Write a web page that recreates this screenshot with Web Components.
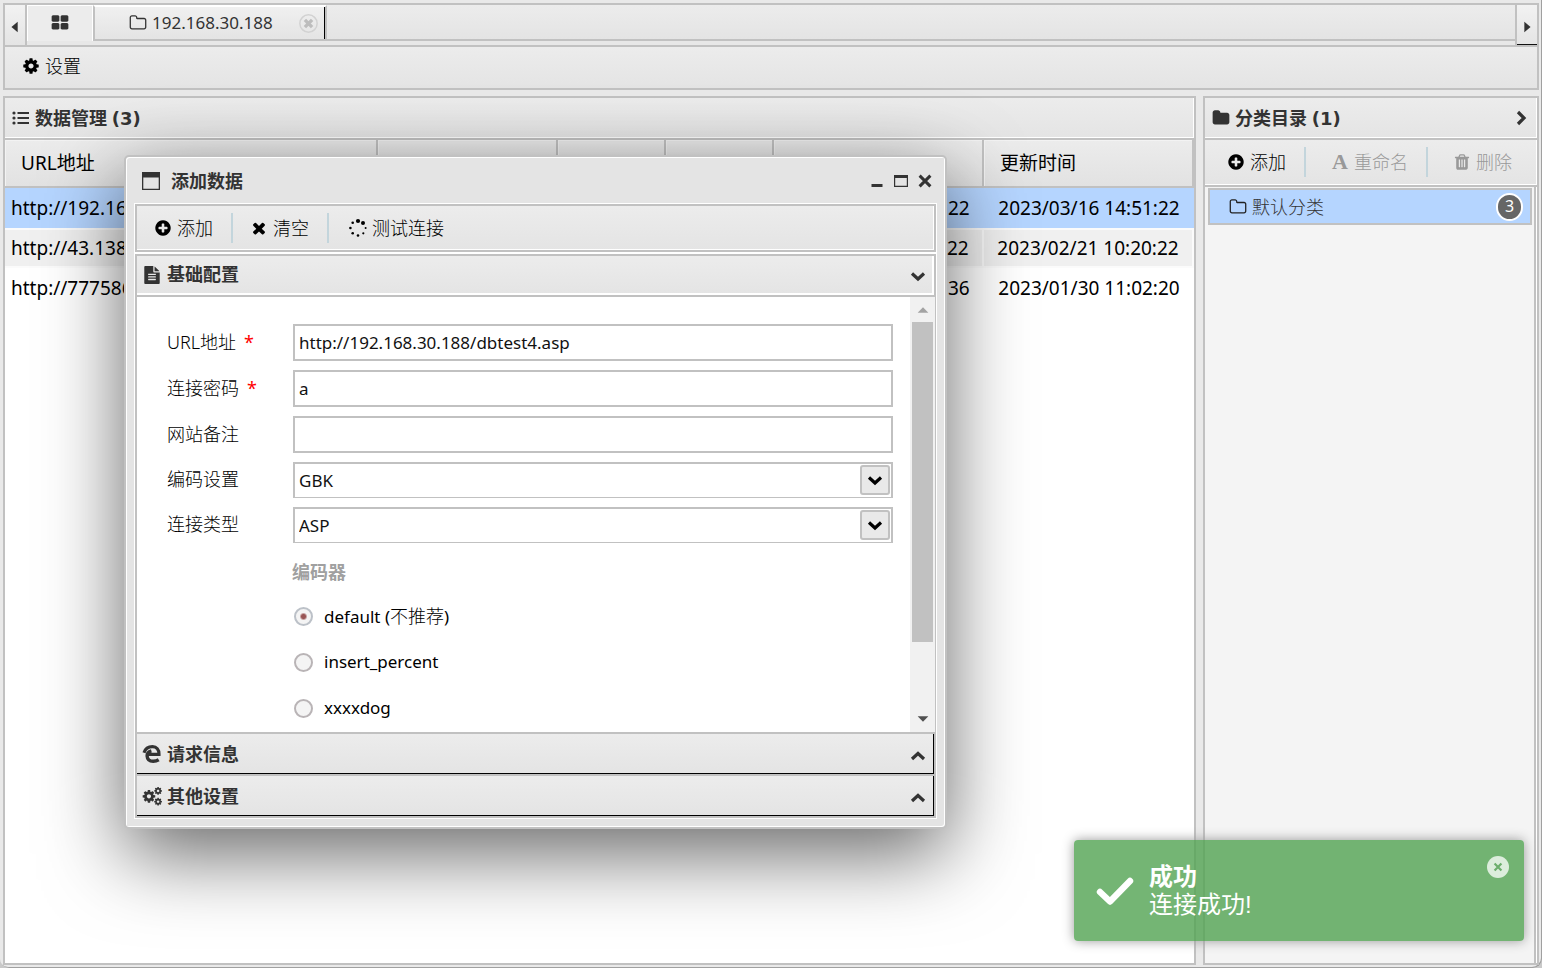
<!DOCTYPE html>
<html lang="zh-CN">
<head>
<meta charset="utf-8">
<title>数据管理</title>
<style>
  html, body { height: 100%; }
  body {
    margin: 0;
    overflow: hidden;
    background: #c9c9c9;
    color: #000;
    font: 18px/24px "Noto Sans", "Noto Sans CJK SC", sans-serif;
    --line: #c1c1c1;
    --ink: #333;
    --bar: linear-gradient(#ececec, #e4e4e4);
    --select: #b5d5ff;
    --count-font: "DejaVu Sans", "Noto Sans CJK SC", sans-serif;
  }
</style>
</head>
<body>
<app-shell></app-shell>

<script>
const COG = 'M1152 896q0-106-75-181t-181-75-181 75-75 181 75 181 181 75 181-75 75-181zm512-109v222q0 12-8 23t-20 13l-185 28q-19 54-39 91 35 50 107 138 10 12 10 25t-9 23q-27 37-99 108t-94 71q-12 0-26-9l-138-108q-44 23-91 38-16 136-29 186-7 28-36 28h-222q-14 0-24.5-8.5t-11.5-21.5l-28-184q-49-16-90-37l-141 107q-10 9-25 9-14 0-25-11-126-114-165-168-7-10-7-23 0-12 8-23 15-21 51-66.5t54-70.5q-27-50-41-99l-183-27q-13-2-21-12.5t-8-23.5v-222q0-12 8-23t19-13l186-28q14-46 39-92-40-57-107-138-10-12-10-24 0-10 9-23 26-36 98.5-107.5t94.5-71.5q13 0 26 10l138 107q44-23 91-38 16-136 29-186 7-28 36-28h222q14 0 24.5 8.5t11.5 21.5l28 184q49 16 90 37l142-107q9-9 24-9 13 0 25 10 129 119 165 170 7 8 7 22 0 12-8 23-15 21-51 66.5t-54 70.5q26 50 41 98l183 28q13 2 21 12.5t8 23.5z';
const fa = d => `<svg viewBox="0 0 1792 1792"><path fill="currentColor" d="${d}"/></svg>`;
const pic = (s, box = '0 0 18 18') => `<svg viewBox="${box}" fill="currentColor">${s}</svg>`;
const chevron = pts => pic(`<polyline points="${pts}" fill="none" stroke="currentColor" stroke-width="3.2"/>`);
const ICONS = {
  cog: fa(COG),
  plus: fa('M1344 960v-128q0-26-19-45t-45-19h-256v-256q0-26-19-45t-45-19h-128q-26 0-45 19t-19 45v256h-256q-26 0-45 19t-19 45v128q0 26 19 45t45 19h256v256q0 26 19 45t45 19h128q26 0 45-19t19-45v-256h256q26 0 45-19t19-45zm320-64q0 209-103 385.5t-279.5 279.5-385.5 103-385.5-103-279.5-279.5-103-385.5 103-385.5 279.5-279.5 385.5-103 385.5 103 279.5 279.5 103 385.5z'),
  times: fa('M1490 1322q0 40-28 68l-136 136q-28 28-68 28t-68-28l-294-294-294 294q-28 28-68 28t-68-28l-136-136q-28-28-28-68t28-68l294-294-294-294q-28-28-28-68t28-68l136-136q28-28 68-28t68 28l294 294 294-294q28-28 68-28t68 28l136 136q28 28 28 68t-28 68l-294 294 294 294q28 28 28 68z'),
  close: pic('<path d="M3.600 3.600l10.800 10.800M14.400 3.600L3.600 14.400" stroke="currentColor" stroke-width="3"/>'),
  folder: fa('M1728 608v704q0 92-66 158t-158 66h-1216q-92 0-158-66t-66-158v-960q0-92 66-158t158-66h320q92 0 158 66t66 158v32h672q92 0 158 66t66 158z'),
  'folder-open': fa('M1600 1312v-704q0-40-28-68t-68-28h-704q-40 0-68-28t-28-68v-64q0-40-28-68t-68-28h-320q-40 0-68 28t-28 68v960q0 40 28 68t68 28h1216q40 0 68-28t28-68zm128-704v704q0 92-66 158t-158 66h-1216q-92 0-158-66t-66-158v-960q0-92 66-158t158-66h320q92 0 158 66t66 158v32h672q92 0 158 66t66 158z'),
  grid: fa('M832 1024v384q0 52-38 90t-90 38h-512q-52 0-90-38t-38-90v-384q0-52 38-90t90-38h512q52 0 90 38t38 90zm0-768v384q0 52-38 90t-90 38h-512q-52 0-90-38t-38-90v-384q0-52 38-90t90-38h512q52 0 90 38t38 90zm896 768v384q0 52-38 90t-90 38h-512q-52 0-90-38t-38-90v-384q0-52 38-90t90-38h512q52 0 90 38t38 90zm0-768v384q0 52-38 90t-90 38h-512q-52 0-90-38t-38-90v-384q0-52 38-90t90-38h512q52 0 90 38t38 90z'),
  file: fa('M1596 476q14 14 28 36h-472v-472q22 14 36 28zm-476 164h544v1056q0 40-28 68t-68 28h-1344q-40 0-68-28t-28-68v-1600q0-40 28-68t68-28h800v544q0 40 28 68t68 28zm160 736v-64q0-14-9-23t-23-9h-704q-14 0-23 9t-9 23v64q0 14 9 23t23 9h704q14 0 23-9t9-23zm0-256v-64q0-14-9-23t-23-9h-704q-14 0-23 9t-9 23v64q0 14 9 23t23 9h704q14 0 23-9t9-23zm0-256v-64q0-14-9-23t-23-9h-704q-14 0-23 9t-9 23v64q0 14 9 23t23 9h704q14 0 23-9t9-23z'),
  trash: fa('M704 1376v-704q0-14-9-23t-23-9h-64q-14 0-23 9t-9 23v704q0 14 9 23t23 9h64q14 0 23-9t9-23zm256 0v-704q0-14-9-23t-23-9h-64q-14 0-23 9t-9 23v704q0 14 9 23t23 9h64q14 0 23-9t9-23zm256 0v-704q0-14-9-23t-23-9h-64q-14 0-23 9t-9 23v704q0 14 9 23t23 9h64q14 0 23-9t9-23zm-544-992h448l-48-117q-7-9-17-11h-317q-10 2-17 11zm928 32v64q0 14-9 23t-23 9h-96v948q0 83-47 143.5t-113 60.5h-832q-66 0-113-58.5t-47-141.5v-952h-96q-14 0-23-9t-9-23v-64q0-14 9-23t23-9h309l70-167q15-37 54-63t79-26h320q40 0 79 26t54 63l70 167h309q14 0 23 9t9 23z'),
  list: pic('<circle cx="2" cy="4" r="1.600"/><circle cx="2" cy="9" r="1.600"/><circle cx="2" cy="14" r="1.600"/><path d="M5.500 2.900h11.500v2.200H5.500zM5.500 7.900h11.500v2.200H5.500zM5.500 12.900h11.500v2.200H5.500z"/>'),
  win: pic('<path fill-rule="evenodd" d="M0 0h18v18H0zM1.3 5.5v11.2h15.4V5.5z"/>'),
  cogs: pic(`<path transform="translate(-1.4 2) scale(.0082)" d="${COG}"/><path transform="translate(10.6 -.6) scale(.005)" d="${COG}"/><path transform="translate(10.6 10.2) scale(.005)" d="${COG}"/>`),
  edge: pic('<path fill="none" stroke="currentColor" stroke-width="3.2" d="M5 9.300h11C16.200 4.600 13.600 1.700 9.500 1.700 5 1.700 2.200 4 1 7.800"/><path fill="none" stroke="currentColor" stroke-width="3.400" d="M8.400 5.800C5.300 6.600 4 9 4.100 11c.2 3.400 2.600 5.300 6.100 5.300 2.100 0 3.900-.5 5.500-1.500"/>'),
  spinner: pic('<circle cx="9" cy="2" r="2.1"/><circle cx="14" cy="4" r="2"/><circle cx="16.600" cy="9" r="1"/><circle cx="14.300" cy="14.300" r="1.100"/><circle cx="9" cy="16.500" r="1.300"/><circle cx="3.700" cy="14.300" r="1.300"/><circle cx="1.400" cy="9" r="1.300"/><circle cx="3.700" cy="3.700" r="1.300"/>'),
  down: chevron('3,6.500 9,12 15,6.500'),
  up: chevron('3,12 9,6.500 15,12'),
  right: chevron('6,3 12,9 6,15'),
  min: pic('<path d="M3.500 12h11v3h-11z"/>'),
  max: pic('<path fill-rule="evenodd" d="M2 3h14v12H2zM3.200 6v7.800h11.600V6z"/>'),
  check: pic('<polyline points="3,16 13,25.500 33,5" fill="none" stroke="currentColor" stroke-width="6.400" stroke-linecap="round" stroke-linejoin="round"/>', '0 0 36 30'),
  'tri-left': pic('<path d="M12 3v12L5 9z"/>'),
  'tri-right': pic('<path d="M6 3v12l7-6z"/>'),
  'tri-up': pic('<path d="M3 12h12L9 6z"/>'),
  'tri-down': pic('<path d="M3 6h12l-6 6z"/>'),
  ring: pic('<circle cx="9" cy="9" r="8.200" fill="none" stroke="currentColor" stroke-width="1.400"/><path d="M5.600 5.600l6.800 6.800M12.400 5.600l-6.800 6.800" stroke="#bdbdbd" stroke-width="3.200"/>'),
  disc: pic('<circle cx="9" cy="9" r="9"/><path d="M6.200 6.200l5.600 5.600M11.800 6.200l-5.600 5.600" stroke="#6cae6c" stroke-width="1.800"/>')
};

function define(name, css, html, setup) {
  const template = document.createElement('template');
  template.innerHTML = `<style>*{box-sizing:border-box}button{font:inherit;color:inherit;background:none;border:0;padding:0;margin:0}${css}</style>${html}`;
  customElements.define(name, class extends HTMLElement {
    connectedCallback() {
      if (this.shadowRoot) return;
      const root = this.attachShadow({ mode: 'open' });
      root.append(template.content.cloneNode(true));
      if (setup) setup(this, root);
    }
  });
}

define('ui-icon', `
  :host { display: block; flex: none; width: var(--size, 18px); height: var(--size, 18px); }
  svg { display: block; width: 100%; height: 100%; overflow: visible; }`,
  '', (el, root) => {
    root.append(document.createRange().createContextualFragment(ICONS[el.getAttribute('name')]));
  });

define('tool-button', `
  :host { display: flex; }
  button { display: flex; align-items: center; gap: 5px; line-height: 24px; padding: 0 18px 0 var(--lead, 17px); white-space: nowrap; color: #000; font-weight: 300; }
  button:disabled { color: #999; }
  :host([divided]) button::after { content: ""; width: 2px; height: 30px; background: #c3d5dc; margin: 0 -20px 0 13px; }
  :host([divided]) { margin-right: 2px; }`,
  `<button type="button"><slot name="icon"></slot><slot></slot></button>`,
  (el, root) => { root.querySelector('button').disabled = el.hasAttribute('disabled'); });

define('tab-bar', `
  :host { display: flex; height: 42px; border: 2px solid var(--line); border-bottom: 0; background: #e7e7e7; color: var(--ink); }
  .arrow { display: flex; align-items: center; justify-content: center; width: 22px; padding-top: 4px; background: linear-gradient(#f2f2f2, #e4e4e4); --size: 16px; }
  .prev { border-right: 2px solid var(--line); }
  .next { border-left: 2px solid var(--line); box-shadow: inset 0 -1px #111; }
  .tab { display: flex; align-items: center; height: 36px; background: linear-gradient(#f0f0f0, #e4e4e4); border-top: 2px solid #fff; }
  .home { width: 66px; justify-content: center; background: #ececec; border: solid #fff; border-width: 1px 1px 0; padding-bottom: 2px; }
  .session { width: 234px; gap: 5px; padding-left: 34px; border: 2px solid var(--line); border-top-color: #fff; box-shadow: inset -1px 0 #000; font-size: 17px; }
  .session .close { margin-left: 21px; color: #d2d2d2; --size: 19px; }
  .rest { flex: 1; height: 36px; background: var(--bar); border-bottom: 2px solid var(--line); }`,
  `<button class="arrow prev" aria-label="上一个"><ui-icon name="tri-left"></ui-icon></button>
   <button class="tab home" aria-label="主页"><ui-icon name="grid"></ui-icon></button>
   <div class="tab session"><ui-icon name="folder-open"></ui-icon><span>192.168.30.188</span><button class="close" aria-label="关闭"><ui-icon name="ring"></ui-icon></button></div>
   <div class="rest"></div>
   <button class="arrow next" aria-label="下一个"><ui-icon name="tri-right"></ui-icon></button>`);

define('panel-header', `
  :host { display: flex; align-items: center; gap: 5px; height: 42px; flex: none; padding: 0 7px 0 7px; background: var(--bar); border-bottom: 2px solid var(--line); box-shadow: inset -1px -1px #fff; color: var(--ink); }
  h2 { margin: 0; flex: 1; font-size: 18px; line-height: 24px; font-weight: 600; }
  span { font: bold 18px/24px var(--count-font); }`,
  `<slot name="icon"></slot><h2><slot></slot> <span></span></h2><slot name="action"></slot>`,
  (el, root) => { root.querySelector('span').textContent = `(${el.getAttribute('count')})`; });

define('data-panel', `
  :host { display: flex; flex-direction: column; flex: 1; min-width: 0; border: 2px solid var(--line); background: #fff; }
  table { width: 100%; table-layout: fixed; border-collapse: separate; border-spacing: 0; font-size: 19px; }
  .md { width: 180px; } .sm { width: 108px; } .date { width: 210px; }
  th { height: 48px; padding: 0 0 0 16px; text-align: left; font-weight: 400; line-height: 24px; background: linear-gradient(#ececec, #e2e2e2); border: solid var(--line); border-width: 0 2px 2px 0; box-shadow: inset 1px 1px #f3f3f3; }
  td { height: 40px; padding: 0 6px; overflow: hidden; white-space: nowrap; line-height: 24px; }
  td:nth-child(n+5) { text-align: center; padding: 0; }
  tr.on td { background: var(--select); }
  tr.alt td { background: #f0f0f0; border: solid #fbfbfb; border-width: 2px 2px 2px 0; }`,
  `<panel-header count="3"><ui-icon slot="icon" name="list"></ui-icon>数据管理</panel-header>
   <table>
     <colgroup><col><col class="md"><col class="sm"><col class="sm"><col class="date"><col class="date"></colgroup>
     <thead><tr><th>URL地址</th><th></th><th></th><th></th><th></th><th>更新时间</th></tr></thead>
     <tbody>
       <tr class="on"><td>http://192.168</td><td></td><td></td><td></td><td>2023/03/16 14:51:22</td><td>2023/03/16 14:51:22</td></tr>
       <tr class="alt"><td>http://43.138</td><td></td><td></td><td></td><td>2023/02/21 10:20:22</td><td>2023/02/21 10:20:22</td></tr>
       <tr><td>http://777586</td><td></td><td></td><td></td><td>2023/01/30 11:00:36</td><td>2023/01/30 11:02:20</td></tr>
     </tbody>
   </table>`);

define('category-panel', `
  :host { display: flex; flex-direction: column; flex: none; width: 336px; border: 2px solid var(--line); background: #fff; }
  .tools { display: flex; height: 47px; flex: none; padding-bottom: 2px; background: var(--bar); border-bottom: 2px solid var(--line); box-shadow: inset -1px -1px #fff; --lead: 22px; }
  .tools [disabled] { --lead: 25px; }
  .letter { width: 18px; text-align: center; font: bold 22px/24px "Liberation Serif", serif; }
  .list { flex: 1; margin-right: 1px; padding: 1px 2px 0 3px; background: #f4f4f4; border-right: 2px solid var(--line); }
  .item { display: flex; align-items: center; gap: 5px; width: 100%; height: 37px; padding: 0 7px 0 19px; background: var(--select); border: 2px solid var(--line); color: var(--ink); font-weight: 300; }
  .item span { flex: 1; text-align: left; line-height: 24px; }
  .item ui-icon { color: #222; }
  b { width: 27px; height: 28px; border: 2px solid #fff; border-radius: 14px; background: #666; color: #fff; font: 16px/23px "Noto Sans", sans-serif; text-align: center; }`,
  `<panel-header count="1"><ui-icon slot="icon" name="folder"></ui-icon>分类目录<ui-icon slot="action" name="right"></ui-icon></panel-header>
   <div class="tools">
     <tool-button divided><ui-icon slot="icon" name="plus"></ui-icon>添加</tool-button>
     <tool-button divided disabled><span slot="icon" class="letter" aria-hidden="true">A</span>重命名</tool-button>
     <tool-button disabled><ui-icon slot="icon" name="trash"></ui-icon>删除</tool-button>
   </div>
   <div class="list"><button class="item" type="button"><ui-icon name="folder-open"></ui-icon><span>默认分类</span><b>3</b></button></div>`);

define('form-field', `
  :host { display: flex; align-items: center; margin: 0 17px 9px 30px; }
  label { width: 126px; flex: none; padding-bottom: 2px; line-height: 24px; font-weight: 300; }
  i { color: #f00; font-style: normal; font-weight: 400; margin-left: 8px; }
  .box { flex: 1; display: flex; position: relative; }
  input, select { flex: 1; min-width: 0; height: 37px; padding: 0 4px; border: 2px solid var(--line); border-radius: 0; background: #fff; color: #111; font: 17px/24px "Noto Sans", sans-serif; outline: 0; }
  select { height: 36px; appearance: none; border-bottom-width: 1px; }
  .drop { position: absolute; right: 3px; top: 3px; width: 30px; height: 30px; display: flex; align-items: center; justify-content: center; border: 2px solid var(--line); border-radius: 3px; background: #e9e9e9; pointer-events: none; }`,
  `<label for="f"></label><div class="box"></div>`,
  (el, root) => {
    const label = root.querySelector('label'), box = root.querySelector('.box');
    label.textContent = el.getAttribute('label');
    if (el.hasAttribute('required')) label.insertAdjacentHTML('beforeend', '<i>*</i>');
    const value = el.getAttribute('value') || '';
    if (el.hasAttribute('options')) {
      box.innerHTML = `<select id="f">${el.getAttribute('options').split(',').map(o => `<option>${o}</option>`).join('')}</select><span class="drop"><ui-icon name="down"></ui-icon></span>`;
    } else {
      box.innerHTML = '<input id="f" type="text">';
      box.firstChild.value = value;
    }
  });

define('radio-group', `
  :host { display: block; padding-left: 157px; }
  h3 { margin: 0 0 0 -2px; height: 41px; font-size: 18px; line-height: 40px; font-weight: 600; color: #a0a0a0; }
  label { display: flex; align-items: center; gap: 11px; height: 46px; font-size: 17px; line-height: 24px; }
  input { appearance: none; width: 19px; height: 19px; margin: 0; border: 2px solid #b9b4b6; border-radius: 50%; background: #f4f4f4; }
  input:checked { background: radial-gradient(circle, #955 0 2px, #f4f4f4 4px); border-color: #bcc1c8; }
  em { font-size: 18px; font-style: normal; font-weight: 300; }`,
  `<h3>编码器</h3>
   <label><input type="radio" name="e" checked><span>default (<em>不推荐</em>)</span></label>
   <label><input type="radio" name="e"><span>insert_percent</span></label>
   <label><input type="radio" name="e"><span>xxxxdog</span></label>`);

define('accordion-cell', `
  :host { display: block; }
  .head { display: flex; align-items: center; gap: 6px; width: 100%; height: 42px; padding: 0 7px 0 6px; border: solid var(--line); border-width: 2px 2px 0; background: var(--bar); box-shadow: inset -1px -1px #000; color: var(--ink); font-weight: 600; text-align: left; }
  .head span { flex: 1; line-height: 24px; padding-bottom: 1px; }
  .head > ui-icon { margin-top: 3px; }
  .body { display: none; }
  :host([open]) .head { height: 43px; padding-bottom: 2px; border-bottom-width: 2px; box-shadow: inset -2px -2px #fff; }
  :host([open]) .body { display: flex; background: #fff; border: solid var(--line); border-width: 0 2px; }
  .form { flex: 1; padding: 27px 0 1px; }
  .bar { display: flex; flex-direction: column; align-items: center; width: 25px; margin-right: -1px; padding: 5px 2px; background: #f1f1f1; --size: 16px; color: #505050; }
  .bar ui-icon:first-child { color: #a3a3a3; }
  .thumb { width: 21px; height: 320px; margin: 4px 0 auto; background: #c1c1c1; }`,
  `<button class="head" type="button"><slot name="icon"></slot><span></span></button>
   <div class="body"><div class="form"><slot></slot></div><div class="bar"><ui-icon name="tri-up"></ui-icon><div class="thumb"></div><ui-icon name="tri-down"></ui-icon></div></div>`,
  (el, root) => {
    root.querySelector('.head span').textContent = el.getAttribute('label');
    const icon = document.createElement('ui-icon');
    icon.setAttribute('name', el.hasAttribute('open') ? 'down' : 'up');
    root.querySelector('.head').append(icon);
  });

define('dialog-window', `
  :host { display: flex; flex-direction: column; padding: 0 8px 8px; border: 2px solid var(--line); border-radius: 5px; background: #e4e4e4; box-shadow: inset 1px 1px #fff, inset -1px -1px #fff, 0 25px 80px rgba(0,0,0,.6); color: var(--ink); }
  header { display: flex; align-items: center; gap: 11px; height: 46px; padding: 2px 3px 0 8px; }
  h2 { flex: 1; margin: 0; font-size: 18px; line-height: 24px; font-weight: 600; padding-bottom: 1px; }
  .controls { display: flex; gap: 6px; }
  .content { border: 1px solid #fff; background: #fff; color: #000; }
  .tools { display: flex; height: 48px; margin-bottom: 2px; border: 2px solid var(--line); background: var(--bar); box-shadow: inset -1px -1px #fff; }
  .tools > :last-child { --lead: 20px; }
  .end { height: 2px; background: var(--line); }`,
  `<header><ui-icon name="win"></ui-icon><h2>添加数据</h2>
     <div class="controls"><button aria-label="最小化"><ui-icon name="min"></ui-icon></button><button aria-label="最大化"><ui-icon name="max"></ui-icon></button><button aria-label="关闭"><ui-icon name="close"></ui-icon></button></div></header>
   <div class="content">
     <div class="tools">
       <tool-button divided><ui-icon slot="icon" name="plus"></ui-icon>添加</tool-button>
       <tool-button divided><ui-icon slot="icon" name="times"></ui-icon>清空</tool-button>
       <tool-button><ui-icon slot="icon" name="spinner"></ui-icon>测试连接</tool-button>
     </div>
     <accordion-cell open label="基础配置"><ui-icon slot="icon" name="file"></ui-icon>
       <form-field label="URL地址" required value="http://192.168.30.188/dbtest4.asp"></form-field>
       <form-field label="连接密码" required value="a"></form-field>
       <form-field label="网站备注"></form-field>
       <form-field label="编码设置" options="GBK"></form-field>
       <form-field label="连接类型" options="ASP"></form-field>
       <radio-group></radio-group>
     </accordion-cell>
     <accordion-cell label="请求信息"><ui-icon slot="icon" name="edge"></ui-icon></accordion-cell>
     <accordion-cell label="其他设置"><ui-icon slot="icon" name="cogs"></ui-icon></accordion-cell>
     <div class="end"></div>
   </div>`);

define('toast-message', `
  :host { display: flex; align-items: center; gap: 16px; width: 450px; height: 101px; padding: 0 15px 0 23px; border-radius: 4px; background: rgba(81,163,81,.8); box-shadow: 0 0 12px #999; color: #fff; font: 24px/28px "Liberation Sans", "Noto Sans CJK SC", sans-serif; }
  ui-icon { --size: 36px; }
  div { flex: 1; }
  strong, span { display: block; }
  strong { font-weight: 600; }
  button { align-self: flex-start; margin-top: 16px; color: #dceddc; }
  button ui-icon { --size: 22px; }`,
  `<ui-icon name="check"></ui-icon><div role="status"><strong>成功</strong><span>连接成功!</span></div><button aria-label="关闭"><ui-icon name="disc"></ui-icon></button>`);

define('app-shell', `
  :host { display: flex; flex-direction: column; position: relative; height: 100vh; padding: 3px; background: #e9e9e9; border-radius: 0 0 9px 9px; box-shadow: inset -1px -1px #a0a0a0; box-sizing: border-box; }
  .tools { display: flex; flex: none; height: 45px; margin-bottom: 6px; padding-bottom: 3px; border: 2px solid var(--line); background: var(--bar); }
  main { display: flex; flex: 1; gap: 7px; min-height: 0; }
  dialog-window { position: absolute; left: 124px; top: 155px; width: 823px; box-sizing: border-box; }
  toast-message { position: absolute; right: 18px; bottom: 27px; box-sizing: border-box; }`,
  `<tab-bar></tab-bar>
   <div class="tools"><tool-button><ui-icon slot="icon" name="cog"></ui-icon>设置</tool-button></div>
   <main><data-panel></data-panel><category-panel></category-panel></main>
   <dialog-window></dialog-window>
   <toast-message></toast-message>`);
</script>
</body>
</html>
